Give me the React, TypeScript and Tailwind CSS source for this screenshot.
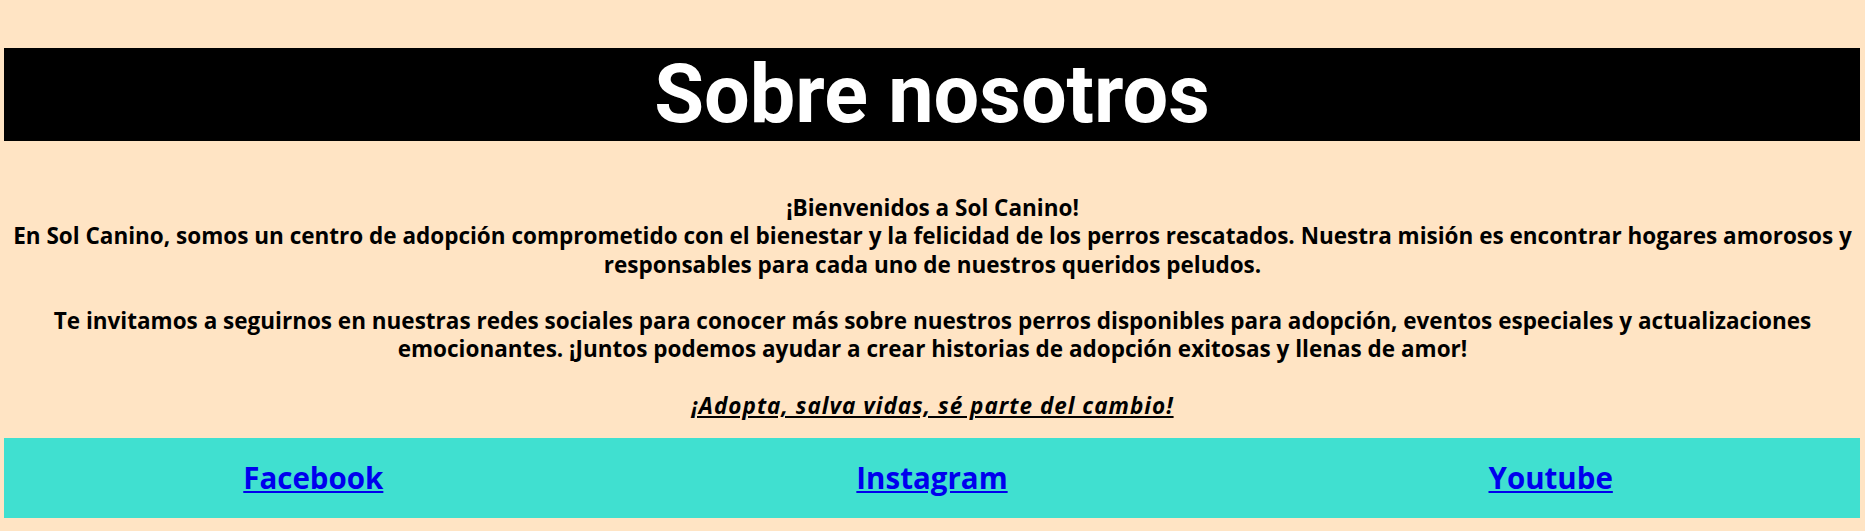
export default function App() {
  return (
    <div className="min-h-[531px] bg-[#ffe4c4] pt-[48px] pb-[12px] font-['Open_Sans',sans-serif]">
      <div className="ml-[4px] mr-[5px] flex h-[93px] items-center justify-center bg-black">
        <h1 className="font-['Roboto',sans-serif] text-[81px] font-bold leading-none text-white">
          Sobre nosotros
        </h1>
      </div>

      <p className="mt-[53px] text-center text-[22.5px] font-bold leading-[28.3px] text-black">
        ¡Bienvenidos a Sol Canino!
        <br />
        En Sol Canino, somos un centro de adopción comprometido con el bienestar y la felicidad de
        los perros rescatados. Nuestra misión es encontrar hogares amorosos y responsables para
        cada uno de nuestros queridos peludos.
        <br />
        <br />
        Te invitamos a seguirnos en nuestras redes sociales para conocer más sobre nuestros perros
        disponibles para adopción, eventos especiales y actualizaciones emocionantes. ¡Juntos
        podemos ayudar a crear historias de adopción exitosas y llenas de amor!
        <br />
        <br />
        <em className="tracking-[1px] underline">¡Adopta, salva vidas, sé parte del cambio!</em>
      </p>

      <nav className="ml-[4px] mr-[5px] mt-[18px] grid h-[80px] grid-cols-3 items-center bg-[#40e0d0]">
        <a href="#" className="justify-self-center text-[29.5px] font-bold text-[#0000ee] underline">
          Facebook
        </a>
        <a href="#" className="justify-self-center text-[29.5px] font-bold text-[#0000ee] underline">
          Instagram
        </a>
        <a href="#" className="justify-self-center text-[29.5px] font-bold text-[#0000ee] underline">
          Youtube
        </a>
      </nav>
    </div>
  );
}
